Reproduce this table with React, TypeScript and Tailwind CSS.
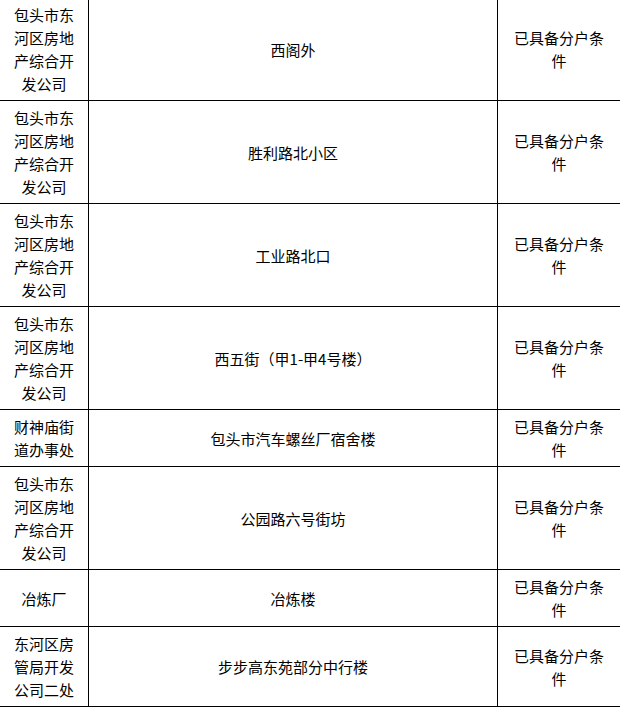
import React from "react";

const rows = [
  { unit: "包头市东河区房地产综合开发公司", name: "西阁外" },
  { unit: "包头市东河区房地产综合开发公司", name: "胜利路北小区" },
  { unit: "包头市东河区房地产综合开发公司", name: "工业路北口" },
  { unit: "包头市东河区房地产综合开发公司", name: "西五街（甲1-甲4号楼）" },
  { unit: "财神庙街道办事处", name: "包头市汽车螺丝厂宿舍楼" },
  { unit: "包头市东河区房地产综合开发公司", name: "公园路六号街坊" },
  { unit: "冶炼厂", name: "冶炼楼" },
  { unit: "东河区房管局开发公司二处", name: "步步高东苑部分中行楼" },
];

export default function App() {
  return (
    <div className="w-[620px] h-[708px] overflow-hidden bg-white text-black">
      <div
        className="-mt-[2px] text-[15px] leading-[23px]"
        style={{ fontFamily: '"Noto Sans CJK SC", "Liberation Sans", sans-serif' }}
      >
        {rows.map((r, i) => (
          <div key={i} className="flex border-b border-black">
            <div className="w-[89px] shrink-0 border-r border-black px-2 py-[5px] flex items-center justify-center text-center">
              {r.unit}
            </div>
            <div className="w-[408px] shrink-0 px-2 py-[5px] flex items-center justify-center text-center">
              {r.name}
            </div>
            <div className="w-[123px] shrink-0 border-l border-black px-[10px] py-[5px] flex items-center justify-center text-center">
              已具备分户条件
            </div>
          </div>
        ))}
      </div>
    </div>
  );
}
